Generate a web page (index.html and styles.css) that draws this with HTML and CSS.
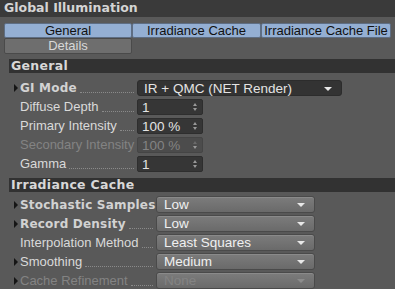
FILE: index.html
```html
<!DOCTYPE html>
<html lang="en">
<head>
    <meta charset="UTF-8">
    <title>Global Illumination</title>
    <link rel="stylesheet" href="styles.css">
</head>
<body>
    <div class="title">Global Illumination</div>

    <div class="tabs">
        <div class="tab active">General</div>
        <div class="tab active">Irradiance Cache</div>
        <div class="tab active">Irradiance Cache File</div>
        <div class="tab">Details</div>
    </div>

    <div class="section">General</div>
    <div class="group general">
        <div class="row">
            <div class="name"><span class="arrow"></span><span class="label bold">GI Mode</span><span class="dots"></span></div>
            <div class="combo wide">IR + QMC (NET Render)<span class="caret"></span></div>
        </div>
        <div class="row">
            <div class="name"><span class="arrow none"></span><span class="label">Diffuse Depth</span><span class="dots"></span></div>
            <div class="spin">1<span class="updown"></span></div>
        </div>
        <div class="row">
            <div class="name"><span class="arrow none"></span><span class="label">Primary Intensity</span><span class="dots"></span></div>
            <div class="spin">100 %<span class="updown"></span></div>
        </div>
        <div class="row off">
            <div class="name"><span class="arrow none"></span><span class="label">Secondary Intensity</span><span class="dots"></span></div>
            <div class="spin">100 %<span class="updown"></span></div>
        </div>
        <div class="row">
            <div class="name"><span class="arrow none"></span><span class="label">Gamma</span><span class="dots"></span></div>
            <div class="spin">1<span class="updown"></span></div>
        </div>
    </div>

    <div class="section">Irradiance Cache</div>
    <div class="group cache">
        <div class="row">
            <div class="name"><span class="arrow"></span><span class="label bold">Stochastic Samples</span><span class="dots"></span></div>
            <div class="combo light">Low<span class="caret"></span></div>
        </div>
        <div class="row">
            <div class="name"><span class="arrow"></span><span class="label bold">Record Density</span><span class="dots"></span></div>
            <div class="combo light">Low<span class="caret"></span></div>
        </div>
        <div class="row">
            <div class="name"><span class="arrow none"></span><span class="label">Interpolation Method</span><span class="dots"></span></div>
            <div class="combo light">Least Squares<span class="caret"></span></div>
        </div>
        <div class="row">
            <div class="name"><span class="arrow"></span><span class="label">Smoothing</span><span class="dots"></span></div>
            <div class="combo light">Medium<span class="caret"></span></div>
        </div>
        <div class="row off">
            <div class="name"><span class="arrow"></span><span class="label">Cache Refinement</span><span class="dots"></span></div>
            <div class="combo light">None<span class="caret"></span></div>
        </div>
    </div>
</body>
</html>
```

FILE: styles.css
```css
body {
    margin: 0;
    background: #595959;
    font-family: "DejaVu Sans", Verdana, sans-serif;
    font-size: 12px;
    color: #dadada;
    width: 395px;
    height: 289px;
    overflow: hidden;
}

.title {
    height: 17px;
    line-height: 16px;
    padding-left: 4px;
    background: #3a3a3a;
    color: #d4d4d4;
    font-weight: bold;
    font-size: 12.5px;
}

.tabs {
    display: grid;
    grid-template-columns: 128px 129px 130px;
    margin: 6px 4px 0 4px;
    width: 387px;
}

.tab {
    height: 15px;
    line-height: 14px;
    text-align: center;
    background: #6e6e6e;
    color: #d8d8d8;
    border: 1px solid #4a4a4a;
    box-sizing: border-box;
    border-radius: 2px;
    font-family: "Liberation Sans", Arial, sans-serif;
    font-size: 13px;
}

.tab:last-child {
    height: 16px;
}

.tab.active {
    background: #94afd3;
    color: #111;
    border-color: #5e6e84;
}

.section {
    margin: 5px 0 0 9px;
    height: 14px;
    line-height: 14px;
    padding-left: 2px;
    background: #323232;
    color: #d8d8d8;
    font-weight: bold;
    font-size: 12.5px;
    letter-spacing: 0.3px;
}

.group {
    padding-top: 5px;
}

.cache {
    padding-top: 3px;
}

.row {
    display: flex;
    align-items: center;
    height: 19px;
    padding-left: 14px;
}

.name {
    display: flex;
    align-items: center;
    flex: none;
    height: 19px;
}

.general .name {
    width: 123px;
}

.cache .name {
    width: 142px;
}

.arrow {
    flex: none;
    width: 0;
    height: 0;
    border-top: 4px solid transparent;
    border-bottom: 4px solid transparent;
    border-left: 4px solid #151515;
    margin-right: 2px;
}

.arrow.none {
    border-left-color: transparent;
}

.label {
    flex: none;
    white-space: nowrap;
    font-family: "Liberation Sans", Arial, sans-serif;
    font-size: 13px;
}

.label.bold {
    font-family: "DejaVu Sans", Verdana, sans-serif;
    font-weight: bold;
    font-size: 12px;
    letter-spacing: 0.2px;
    color: #d2d2d2;
}

.dots {
    flex: 1;
    align-self: flex-end;
    margin: 0 3px 4px 3px;
    border-bottom: 1px dotted #8a8a8a;
    min-width: 0;
}

.combo, .spin {
    flex: none;
    position: relative;
    box-sizing: border-box;
    height: 16px;
    line-height: 15px;
    padding-left: 6px;
    font-family: "Liberation Sans", Arial, sans-serif;
    font-size: 13.5px;
    color: #e4e4e4;
}

.combo.wide {
    width: 205px;
    background: #333;
    border-radius: 3px;
    border: 1px solid #2c2c2c;
}

.spin {
    width: 66px;
    background: #363636;
    border: 1px solid #2e2e2e;
    border-radius: 2px;
    padding-left: 4px;
}

.combo.light {
    width: 159px;
    height: 17px;
    background: linear-gradient(#7c7c7c, #6a6a6a);
    border: 1px solid #4a4a4a;
    border-radius: 3px;
    box-shadow: inset 0 1px 0 #8a8a8a;
    color: #f0f0f0;
    padding-left: 7px;
}

.caret {
    position: absolute;
    right: 9px;
    top: 6px;
    width: 0;
    height: 0;
    border-left: 4px solid transparent;
    border-right: 4px solid transparent;
    border-top: 4px solid #e8e8e8;
}

.updown {
    position: absolute;
    right: 5px;
    top: 3px;
    width: 0;
    height: 0;
    border-left: 2px solid transparent;
    border-right: 2px solid transparent;
    border-bottom: 3px solid #999;
}

.updown::after {
    content: "";
    position: absolute;
    left: -2px;
    top: 5px;
    border-left: 2px solid transparent;
    border-right: 2px solid transparent;
    border-top: 3px solid #999;
}

.off .label,
.off .combo,
.off .spin {
    color: #838383;
}

.off .spin {
    background: #4c4c4c;
    border-color: #454545;
}

.off .caret {
    border-top-color: #8c8c8c;
}

.off .updown {
    border-bottom-color: #6a6a6a;
}
```
